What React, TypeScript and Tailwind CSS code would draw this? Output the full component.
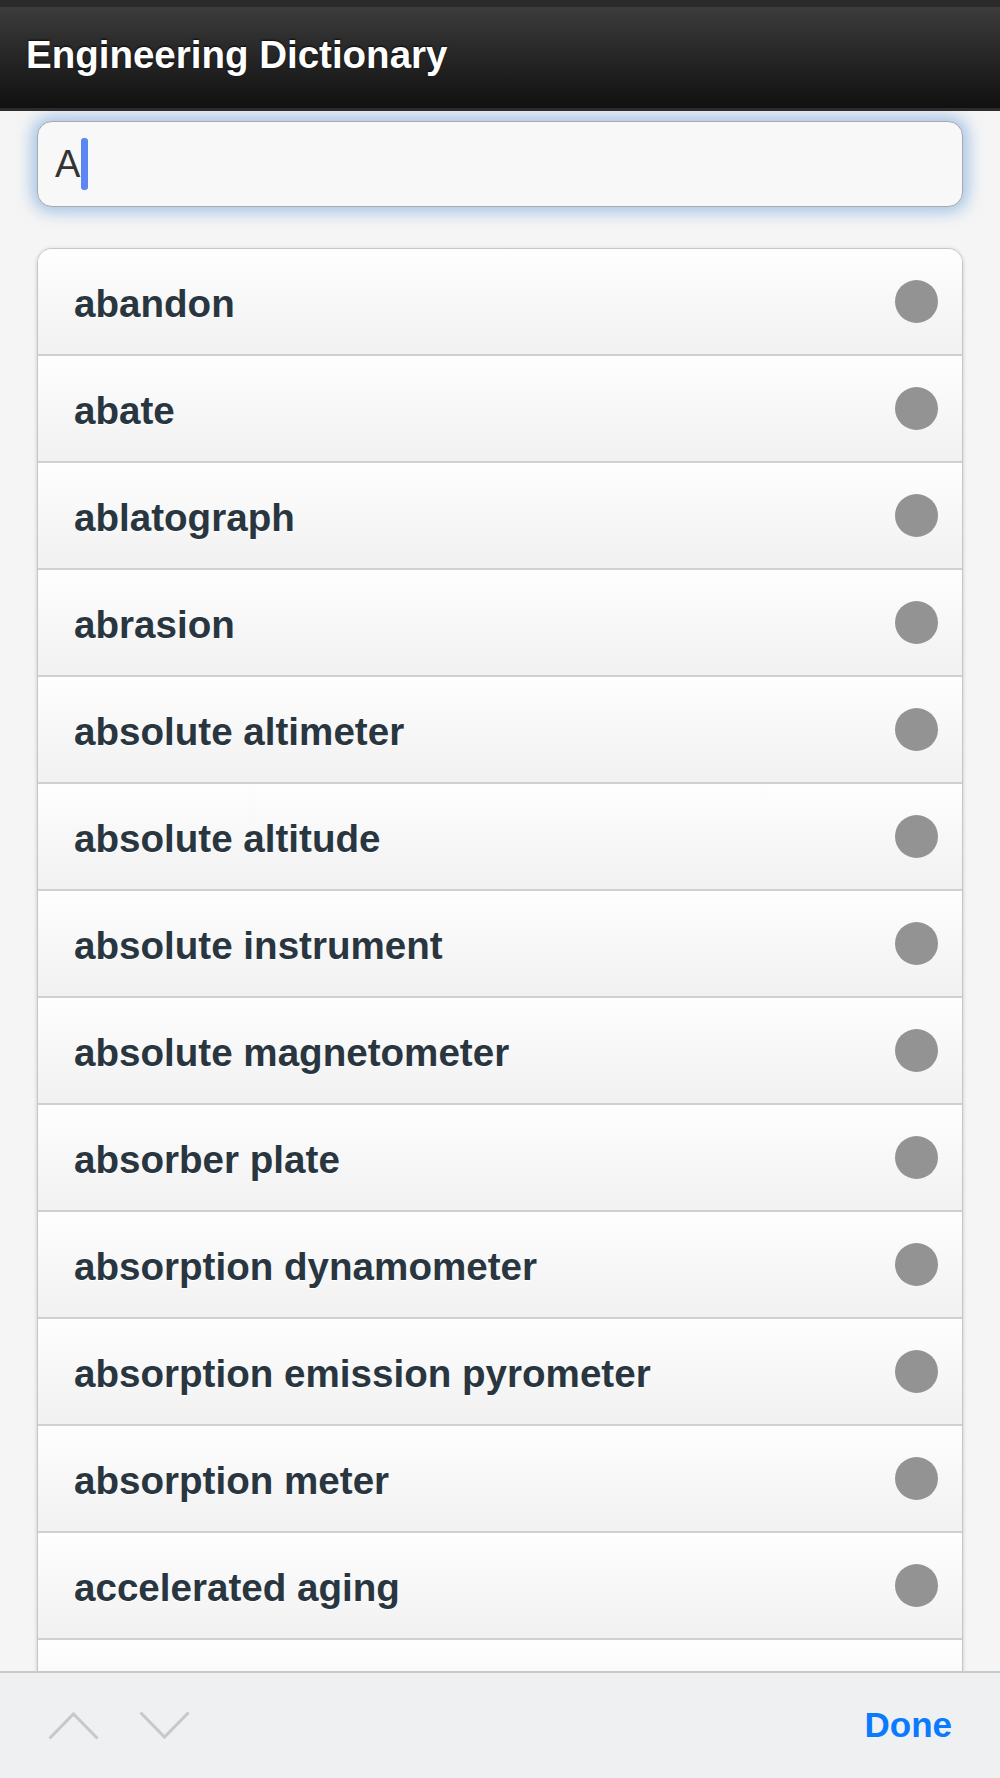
import React from "react";

const words = [
  "abandon",
  "abate",
  "ablatograph",
  "abrasion",
  "absolute altimeter",
  "absolute altitude",
  "absolute instrument",
  "absolute magnetometer",
  "absorber plate",
  "absorption dynamometer",
  "absorption emission pyrometer",
  "absorption meter",
  "accelerated aging",
  "",
];

const font = { fontFamily: '"Liberation Sans", Arial, Helvetica, sans-serif' };

const App: React.FC = () => {
  return (
    <div
      className="flex h-[1778px] w-[1000px] flex-col overflow-hidden bg-[#f5f5f5]"
      style={font}
    >
      {/* header */}
      <div className="flex h-[111px] shrink-0 flex-col border-b-[3px] border-[#2c2c2c] bg-[#2b2b2b]">
        <div className="h-[7px] bg-[#2b2b2b]" />
        <div className="flex flex-1 items-start bg-gradient-to-b from-[#3c3c3c] to-[#111111] pl-[26px] pt-[26px]">
          <h1 className="text-[38.5px] font-bold leading-[44px] text-white [text-shadow:0_-1px_2px_rgba(0,0,0,0.8)]">
            Engineering Dictionary
          </h1>
        </div>
      </div>

      {/* scrolling content */}
      <div className="flex min-h-0 flex-1 flex-col overflow-hidden px-[37px] pt-[10px]">
        <div className="flex h-[86px] shrink-0 items-center rounded-[15px] border border-[#a9a9a9] bg-[#f8f8f8] pl-[17px] shadow-[0_0_16px_5px_rgba(110,160,220,0.6)]">
          <span className="text-[38px] leading-none text-[#333333]">A</span>
          <span className="ml-[1px] h-[52px] w-[7px] rounded-[3px] bg-[#5b86f4]" />
        </div>

        <div className="mt-[41px] shrink-0 overflow-hidden rounded-t-[15px] border-x border-t border-[#c6c6c6] shadow-[0_1px_4px_rgba(0,0,0,0.18)]">
          {words.map((w, i) => (
            <div
              key={i}
              className="flex h-[107px] items-center justify-between border-b-2 border-[#d0d0d0] bg-gradient-to-b from-[#fefefe] to-[#f1f1f1] pl-[36px] pr-[24px]"
            >
              <span className="pt-[5px] text-[38.6px] font-bold text-[#29363f] [text-shadow:0_1px_0_#ffffff]">
                {w}
              </span>
              <span className="h-[43px] w-[43px] rounded-full bg-[#939393]" />
            </div>
          ))}
        </div>
      </div>

      {/* keyboard toolbar */}
      <div className="flex h-[107px] shrink-0 items-center justify-between border-t-2 border-[#c9c9c9] bg-[#eff0f2] pl-[48px] pr-[48px]">
        <div className="flex items-center gap-[40px]">
          <svg width="51" height="29" viewBox="0 0 51 29">
            <path d="M1.5 27.5 L25.5 3 L49.5 27.5" fill="none" stroke="#c8c8c8" strokeWidth="3" />
          </svg>
          <svg width="51" height="29" viewBox="0 0 51 29">
            <path d="M1.5 1.5 L25.5 26 L49.5 1.5" fill="none" stroke="#c8c8c8" strokeWidth="3" />
          </svg>
        </div>
        <span className="text-[35px] font-bold text-[#0a7aff]">Done</span>
      </div>
    </div>
  );
};

export default App;
